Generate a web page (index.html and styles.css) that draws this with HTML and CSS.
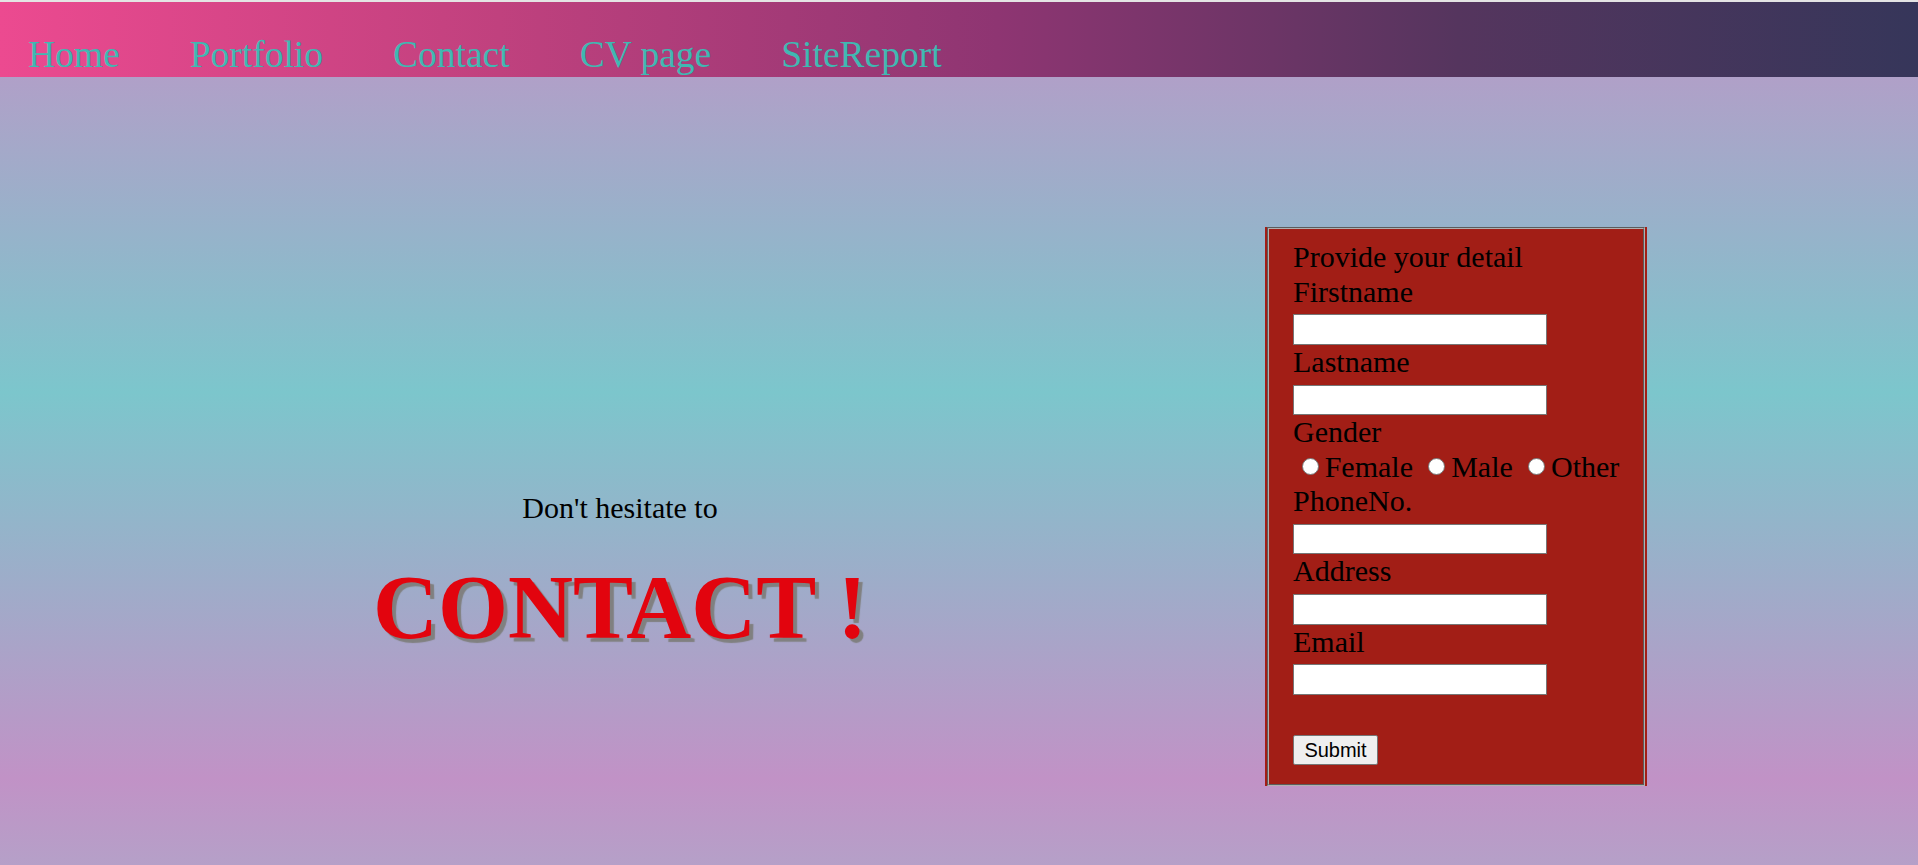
FILE: index.html
```html
<!DOCTYPE html>
<html lang="en">
<head>
<meta charset="utf-8">
<title>Contact</title>
<link rel="stylesheet" href="styles.css">
</head>
<body>
<div class="top-strip"></div>
<nav class="nav">
  <a class="nav-link" href="#">Home</a>
  <a class="nav-link" href="#">Portfolio</a>
  <a class="nav-link" href="#">Contact</a>
  <a class="nav-link" href="#">CV page</a>
  <a class="nav-link" href="#">SiteReport</a>
</nav>
<main class="main">
  <section class="intro">
    <p class="intro-text">Don't hesitate to</p>
    <h1 class="intro-title">CONTACT !</h1>
  </section>
  <form class="contact-form">
    <fieldset class="fs">
      <div class="line">Provide your detail</div>
      <div class="line">Firstname</div>
      <div class="row"><input class="text-input" type="text"></div>
      <div class="line">Lastname</div>
      <div class="row"><input class="text-input" type="text"></div>
      <div class="line">Gender</div>
      <div class="line radios">
        <label class="opt"><input class="radio" type="radio" name="gender"><span>Female</span></label>
        <label class="opt"><input class="radio" type="radio" name="gender"><span>Male</span></label>
        <label class="opt"><input class="radio" type="radio" name="gender"><span>Other</span></label>
      </div>
      <div class="line">PhoneNo.</div>
      <div class="row"><input class="text-input" type="text"></div>
      <div class="line">Address</div>
      <div class="row"><input class="text-input" type="text"></div>
      <div class="line">Email</div>
      <div class="row"><input class="text-input" type="text"></div>
      <div class="line"></div>
      <div class="row"><button class="submit" type="button">Submit</button></div>
    </fieldset>
  </form>
</main>
</body>
</html>
```
FILE: styles.css
```css
html, body {
  margin: 0;
  padding: 0;
}
body {
  font-family: "Liberation Serif", "Times New Roman", serif;
  background: #b4a0c8;
  color: #000;
}
.top-strip {
  height: 2px;
  background: #e4e4e4;
}
.nav {
  display: flex;
  gap: 70px;
  height: 75px;
  box-sizing: border-box;
  padding: 33px 0 2px 28px;
  background: linear-gradient(to right, #ec4a90 0%, #c0417e 26%, #8e3572 52%, #55355e 76%, #36365a 100%);
}
.nav-link {
  font-size: 37.5px;
  line-height: 40px;
  color: #40b8b2;
  text-decoration: none;
  white-space: nowrap;
}
.main {
  display: flex;
  align-items: flex-start;
  min-height: 788px;
  background: linear-gradient(180deg, #b0a0c8 0%, #7cc6cc 40%, #c192c6 89%, #b5a0c8 100%);
}
.intro {
  flex: 0 0 1240px;
  text-align: center;
  padding-top: 413.6px;
}
.intro-text {
  margin: 0;
  font-size: 30px;
  line-height: 34.5px;
}
.intro-title {
  margin: 31px 0 0;
  font-size: 90px;
  line-height: 103px;
  font-weight: bold;
  color: #e2040e;
  text-shadow: 4px 4px 1px #808080;
}
.contact-form {
  margin: 150px 0 0 25px;
  width: 382px;
  background: #a21e16;
}
.fs {
  margin: 0 2px;
  border: 2px groove #b0b0b0;
  padding: 11px 24px 18.75px;
  font-size: 30px;
  line-height: 34.5px;
  min-width: 0;
}
.line {
  height: 34.5px;
  white-space: nowrap;
}
.row {
  height: 35.8px;
  display: flex;
  align-items: flex-end;
}
.text-input {
  box-sizing: border-box;
  width: 254px;
  height: 30.6px;
  margin: 0;
  padding: 1px 4px;
  border: 1px solid #767676;
  background: #fff;
  font-size: 20px;
}
.radios {
  display: flex;
  align-items: center;
  gap: 15.2px;
  padding-left: 8.7px;
}
.opt {
  display: flex;
  align-items: center;
  gap: 6px;
}
.radio {
  appearance: none;
  -webkit-appearance: none;
  box-sizing: border-box;
  width: 17px;
  height: 17px;
  margin: 0;
  border: 1.5px solid #767676;
  border-radius: 50%;
  background: #fff;
}
.submit {
  box-sizing: border-box;
  width: 85px;
  height: 30.5px;
  margin: 0;
  padding: 0;
  border: 1px solid #767676;
  border-radius: 2px;
  background: #efefef;
  font-family: "Liberation Sans", Arial, sans-serif;
  font-size: 20px;
  color: #000;
}
```
